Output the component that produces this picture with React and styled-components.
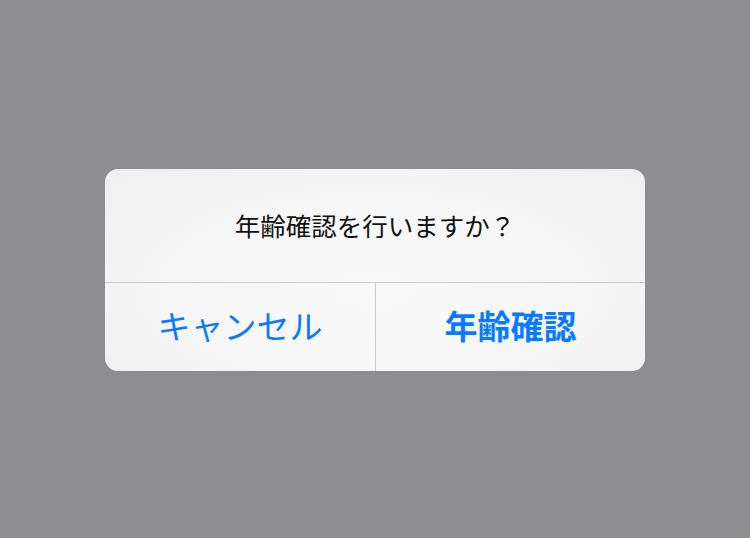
import React from 'react';
import styled, { createGlobalStyle } from 'styled-components';

const GlobalStyle = createGlobalStyle`
  html, body {
    margin: 0;
    padding: 0;
    height: 100%;
    background: #8e8e90;
  }
  #root {
    height: 100%;
  }
`;

const Backdrop = styled.div`
  height: 100%;
  display: flex;
  align-items: center;
  justify-content: center;
  padding-top: 1px;
  box-sizing: border-box;
  font-family: "Noto Sans CJK JP", "Noto Sans", sans-serif;
`;

const Dialog = styled.div`
  width: 540px;
  border-radius: 13px;
  overflow: hidden;
  background: radial-gradient(ellipse at 50% 60%, #fafafa 0%, #f6f6f6 55%, #efefef 100%);
  display: flex;
  flex-direction: column;
`;

const Message = styled.div`
  height: 114px;
  display: flex;
  align-items: center;
  justify-content: center;
  padding-bottom: 2px;
  box-sizing: border-box;
  font-size: 25.5px;
  color: #111;
  border-bottom: 1px solid #c9c9cc;
`;

const Actions = styled.div`
  height: 88px;
  display: grid;
  grid-template-columns: 270px 1fr;
`;

const Action = styled.button`
  border: none;
  background: transparent;
  font-family: inherit;
  color: #0a7aff;
  font-size: 33px;
  font-weight: ${(p) => (p.$primary ? 700 : 400)};
  display: flex;
  align-items: center;
  justify-content: center;
  padding: 0 0 4px;
  & + & {
    border-left: 1px solid #c9c9cc;
  }
`;

const App = () => {
  return (
    <>
      <GlobalStyle />
      <Backdrop>
        <Dialog>
          <Message>年齢確認を行いますか？</Message>
          <Actions>
            <Action>キャンセル</Action>
            <Action $primary>年齢確認</Action>
          </Actions>
        </Dialog>
      </Backdrop>
    </>
  );
};

export default App;
